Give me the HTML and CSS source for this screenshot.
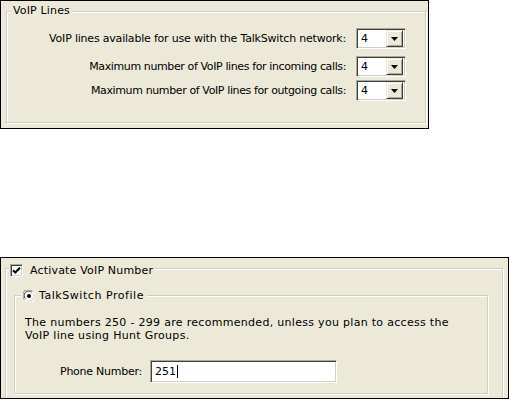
FILE: index.html
```html
<!DOCTYPE html>
<html>
<head>
<meta charset="utf-8">
<link rel="stylesheet" href="styles.css">
</head>
<body>
<div class="panel top-panel">
  <div class="group lines-group">
    <span class="group-title">VoIP Lines</span>
    <div class="row row-first">
      <span class="label label-wide">VoIP lines available for use with the TalkSwitch network:</span>
      <div class="combo"><span class="combo-value">4</span><span class="combo-btn"><svg width="7" height="4" viewBox="0 0 7 4"><path d="M0 0h7l-3.5 4z" fill="#000"/></svg></span></div>
    </div>
    <div class="row row-second">
      <span class="label label-narrow">Maximum number of VoIP lines for incoming calls:</span>
      <div class="combo"><span class="combo-value">4</span><span class="combo-btn"><svg width="7" height="4" viewBox="0 0 7 4"><path d="M0 0h7l-3.5 4z" fill="#000"/></svg></span></div>
    </div>
    <div class="row row-third">
      <span class="label label-narrow">Maximum number of VoIP lines for outgoing calls:</span>
      <div class="combo"><span class="combo-value">4</span><span class="combo-btn"><svg width="7" height="4" viewBox="0 0 7 4"><path d="M0 0h7l-3.5 4z" fill="#000"/></svg></span></div>
    </div>
  </div>
</div>

<div class="panel bottom-panel">
  <div class="group outer-group">
    <label class="group-title check-title">
      <span class="checkbox"><svg width="9" height="9" viewBox="0 0 9 9"><path d="M1 4.2l2.3 2.3L8 1.8" fill="none" stroke="#000" stroke-width="2"/></svg></span>
      <span class="check-text">Activate VoIP Number</span>
    </label>
    <div class="group inner-group">
      <label class="group-title radio-title">
        <svg class="radio" width="12" height="12" viewBox="0 0 12 12">
          <circle cx="6" cy="6" r="5.5" fill="#fff"/>
          <path d="M1.3 9.6A5.5 5.5 0 0 1 9.6 1.3" fill="none" stroke="#8a887c" stroke-width="1"/>
          <path d="M2.4 8.8A4.3 4.3 0 0 1 8.8 2.4" fill="none" stroke="#404040" stroke-width="1"/>
          <path d="M10.7 2.4A5.5 5.5 0 0 1 2.4 10.7" fill="none" stroke="#ffffff" stroke-width="1"/>
          <path d="M9.6 3.2A4.3 4.3 0 0 1 3.2 9.6" fill="none" stroke="#d4d0c8" stroke-width="1"/>
          <circle cx="6" cy="6" r="2" fill="#000"/>
        </svg>
        <span class="radio-text">TalkSwitch Profile</span>
      </label>
      <p class="note">The numbers 250 - 299 are recommended, unless you plan to access the<br>VoIP line using Hunt Groups.</p>
      <div class="phone-row">
        <span class="phone-label">Phone Number:</span>
        <div class="textbox"><span>251</span><span class="caret"></span></div>
      </div>
    </div>
  </div>
</div>
</body>
</html>
```

FILE: styles.css
```css
html, body {
  margin: 0;
  padding: 0;
  background: #fff;
}
body {
  width: 510px;
  height: 400px;
  overflow: hidden;
  font-family: "DejaVu Sans", sans-serif;
  font-size: 11px;
  color: #000;
}
.panel {
  box-sizing: border-box;
  border: 1px solid #000;
  background: #ece9d8;
  overflow: hidden;
}
.top-panel {
  width: 429px;
  height: 129px;
  padding: 10px 0 0 5px;
}
.bottom-panel {
  width: 509px;
  height: 142px;
  margin-top: 128px;
  padding: 10px 0 0 4px;
}
.group {
  position: relative;
  box-sizing: border-box;
  border: 1px solid #d0d0bf;
  box-shadow: inset 1px 1px 0 #fff, 1px 1px 0 #fff;
}
.group-title {
  position: absolute;
  background: #ece9d8;
  line-height: 13px;
  white-space: nowrap;
}
.lines-group {
  width: 420px;
  height: 112px;
  padding: 16px 19px 0 0;
}
.lines-group > .group-title {
  left: 4px;
  top: -8px;
  padding: 0 2px;
  letter-spacing: 0.15px;
}
.row {
  display: flex;
  justify-content: flex-end;
  align-items: center;
  gap: 10px;
  height: 21px;
}
.row-second { margin-top: 7px; }
.row-third { margin-top: 3px; }
.label-wide { letter-spacing: -0.2px; }
.label-narrow { letter-spacing: -0.38px; }
.combo {
  box-sizing: border-box;
  width: 50px;
  height: 21px;
  display: flex;
  align-items: center;
  justify-content: space-between;
  background: #fff;
  border-top: 1px solid #aca899;
  border-left: 1px solid #aca899;
  border-right: 1px solid #fff;
  border-bottom: 1px solid #fff;
  box-shadow: inset 1px 1px 0 #404040, inset -1px -1px 0 #d4d0c8;
  padding: 2px 2px 2px 4px;
}
.combo-value {
  line-height: 15px;
}
.combo-btn {
  box-sizing: border-box;
  width: 17px;
  height: 17px;
  display: flex;
  align-items: center;
  justify-content: center;
  background: #ece9d8;
  border-top: 1px solid #ece9d8;
  border-left: 1px solid #ece9d8;
  border-right: 1px solid #404040;
  border-bottom: 1px solid #404040;
  box-shadow: inset 1px 1px 0 #fff, inset -1px -1px 0 #aca899;
}
.outer-group {
  width: 498px;
  height: 200px;
  padding: 26px 0 0 8px;
}
.check-title {
  display: flex;
  align-items: center;
  gap: 7px;
  left: 3px;
  top: -5px;
  height: 13px;
  padding: 0 2px 0 1px;
}
.check-text { letter-spacing: 0.18px; }
.checkbox {
  box-sizing: border-box;
  width: 13px;
  height: 13px;
  display: flex;
  align-items: center;
  justify-content: center;
  background: #fff;
  border-top: 1px solid #aca899;
  border-left: 1px solid #aca899;
  border-right: 1px solid #fff;
  border-bottom: 1px solid #fff;
  box-shadow: inset 1px 1px 0 #404040, inset -1px -1px 0 #d4d0c8;
}
.inner-group {
  width: 474px;
  height: 99px;
  padding: 20px 0 0 10px;
}
.radio-title {
  display: flex;
  align-items: center;
  gap: 4px;
  left: 6px;
  top: -7px;
  height: 13px;
  padding: 0 3px 0 2px;
}
.radio-text { letter-spacing: 0.55px; }
.note {
  margin: 0;
  line-height: 13px;
  letter-spacing: 0.3px;
}
.phone-row {
  display: flex;
  align-items: center;
  gap: 8px;
  margin: 18px 0 0 35px;
}
.phone-label { letter-spacing: -0.25px; }
.textbox {
  box-sizing: border-box;
  width: 187px;
  height: 23px;
  display: flex;
  align-items: center;
  padding-left: 4px;
  background: #fff;
  border-top: 1px solid #aca899;
  border-left: 1px solid #aca899;
  border-right: 1px solid #fff;
  border-bottom: 1px solid #fff;
  box-shadow: inset 1px 1px 0 #404040, inset -1px -1px 0 #d4d0c8;
}
.caret {
  display: inline-block;
  width: 1px;
  height: 13px;
  background: #000;
  margin-left: 1px;
}
```
